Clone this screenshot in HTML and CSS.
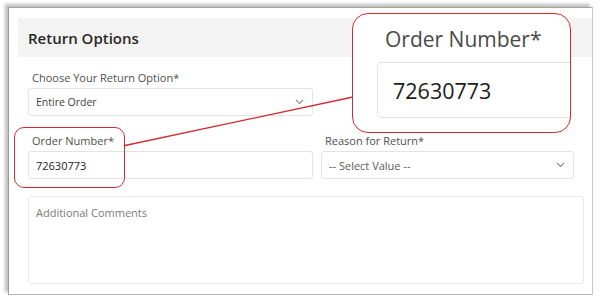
FILE: index.html
```html
<!DOCTYPE html>
<html lang="en">
<head>
  <meta charset="UTF-8" />
  <meta name="viewport" content="width=device-width, initial-scale=1.0" />
  <title>Return Options</title>
  <link rel="stylesheet" href="styles.css">
</head>
<body>
<div class="frame">
  <div class="band">
    <h2>Return Options</h2>
  </div>
  <div class="form">
    <div class="field">
      <label>Choose Your Return Option*</label>
      <div class="box select">
        <span>Entire Order</span>
        <svg class="chev" width="9" height="6" viewBox="0 0 9 6"><path d="M1 1 L4.5 4.5 L8 1" fill="none" stroke="#8a8a8a" stroke-width="1.1"/></svg>
      </div>
    </div>
    <div class="field"></div>
    <div class="field">
      <label>Order Number*</label>
      <div class="box"><span class="value">72630773</span></div>
    </div>
    <div class="field">
      <label>Reason for Return*</label>
      <div class="box select">
        <span class="muted">-- Select Value --</span>
        <svg class="chev" width="9" height="6" viewBox="0 0 9 6"><path d="M1 1 L4.5 4.5 L8 1" fill="none" stroke="#8a8a8a" stroke-width="1.1"/></svg>
      </div>
    </div>
    <div class="comments">
      <span class="placeholder">Additional Comments</span>
    </div>
  </div>
</div>

<!-- annotation overlay -->
<div class="spot"></div>
<svg class="pointer" width="600" height="296" viewBox="0 0 600 296">
  <line x1="125" y1="145.5" x2="353" y2="97" stroke="#d42a2f" stroke-width="1.3"/>
</svg>
<div class="zoom">
  <div class="zoom-label">Order Number*</div>
  <div class="zoom-box">72630773</div>
</div>
</body>
</html>
```

FILE: styles.css
```css
body,
html {
  margin: 0;
  padding: 0;
  background-color: #ffffff;
  font-family: "Open Sans", "Noto Sans", sans-serif;
  color: #3e3e3c;
}
.frame {
  margin: 7px 7px 0 8px;
  height: 276px;
  padding: 10px 0 0 9px;
  border-left: 1px solid #9a9a9a;
  border-top: 1px solid #a5a5a5;
  border-right: 1px solid #c8c8c8;
  border-bottom: 1px solid #b5b5b5;
  box-shadow: -3px -3px 3px rgba(0, 0, 0, 0.25);
  background-color: #fff;
}
.band {
  background-color: #f3f3f3;
  height: 39px;
  display: flex;
  align-items: center;
  padding-left: 10px;
}
.band h2 {
  margin: 0;
  font-size: 15px;
  font-weight: 600;
  color: #2b2826;
}
.form {
  display: grid;
  grid-template-columns: 285px 253px;
  column-gap: 8px;
  row-gap: 17px;
  padding: 13px 0 0 10px;
}
.field label {
  display: block;
  font-size: 11px;
  line-height: 16px;
  padding-left: 4px;
  margin-bottom: 2px;
  color: #4f4f4d;
}
.box {
  height: 26px;
  border: 1px solid #e3e3e3;
  border-radius: 3px;
  display: flex;
  align-items: center;
  justify-content: space-between;
  padding: 0 8px 0 7px;
  font-size: 11px;
  color: #2b2826;
}
.select span {
  font-size: 10.5px;
  color: #3e3e3c;
}
.select .muted {
  font-size: 11px;
  color: #5c5c5c;
}
.value {
  color: #1c1c1c;
}
.chev {
  display: block;
}
.comments {
  grid-column: 1 / 3;
  width: 540px;
  height: 80px;
  border: 1px solid #e8e8e8;
  border-radius: 3px;
  padding: 3px 7px;
}
.placeholder {
  font-size: 11px;
  color: #7a7a7a;
}
.spot {
  position: absolute;
  left: 14px;
  top: 127px;
  width: 109px;
  height: 59px;
  border: 1.5px solid #d42a2f;
  border-radius: 10px;
}
.pointer {
  position: absolute;
  left: 0;
  top: 0;
}
.zoom {
  position: absolute;
  left: 352px;
  top: 13px;
  width: 217px;
  height: 118px;
  border: 1.5px solid #d42a2f;
  border-radius: 16px;
  background-color: #fff;
  overflow: hidden;
}
.zoom-label {
  font-size: 21px;
  line-height: 28px;
  margin: 11px 0 0 32px;
  color: #4a4a48;
}
.zoom-box {
  margin: 9px 0 0 24px;
  height: 54px;
  width: 240px;
  border: 1px solid #e3e3e3;
  border-radius: 4px;
  display: flex;
  align-items: center;
  padding-left: 15px;
  font-size: 21.5px;
  color: #1c1c1c;
}
```
